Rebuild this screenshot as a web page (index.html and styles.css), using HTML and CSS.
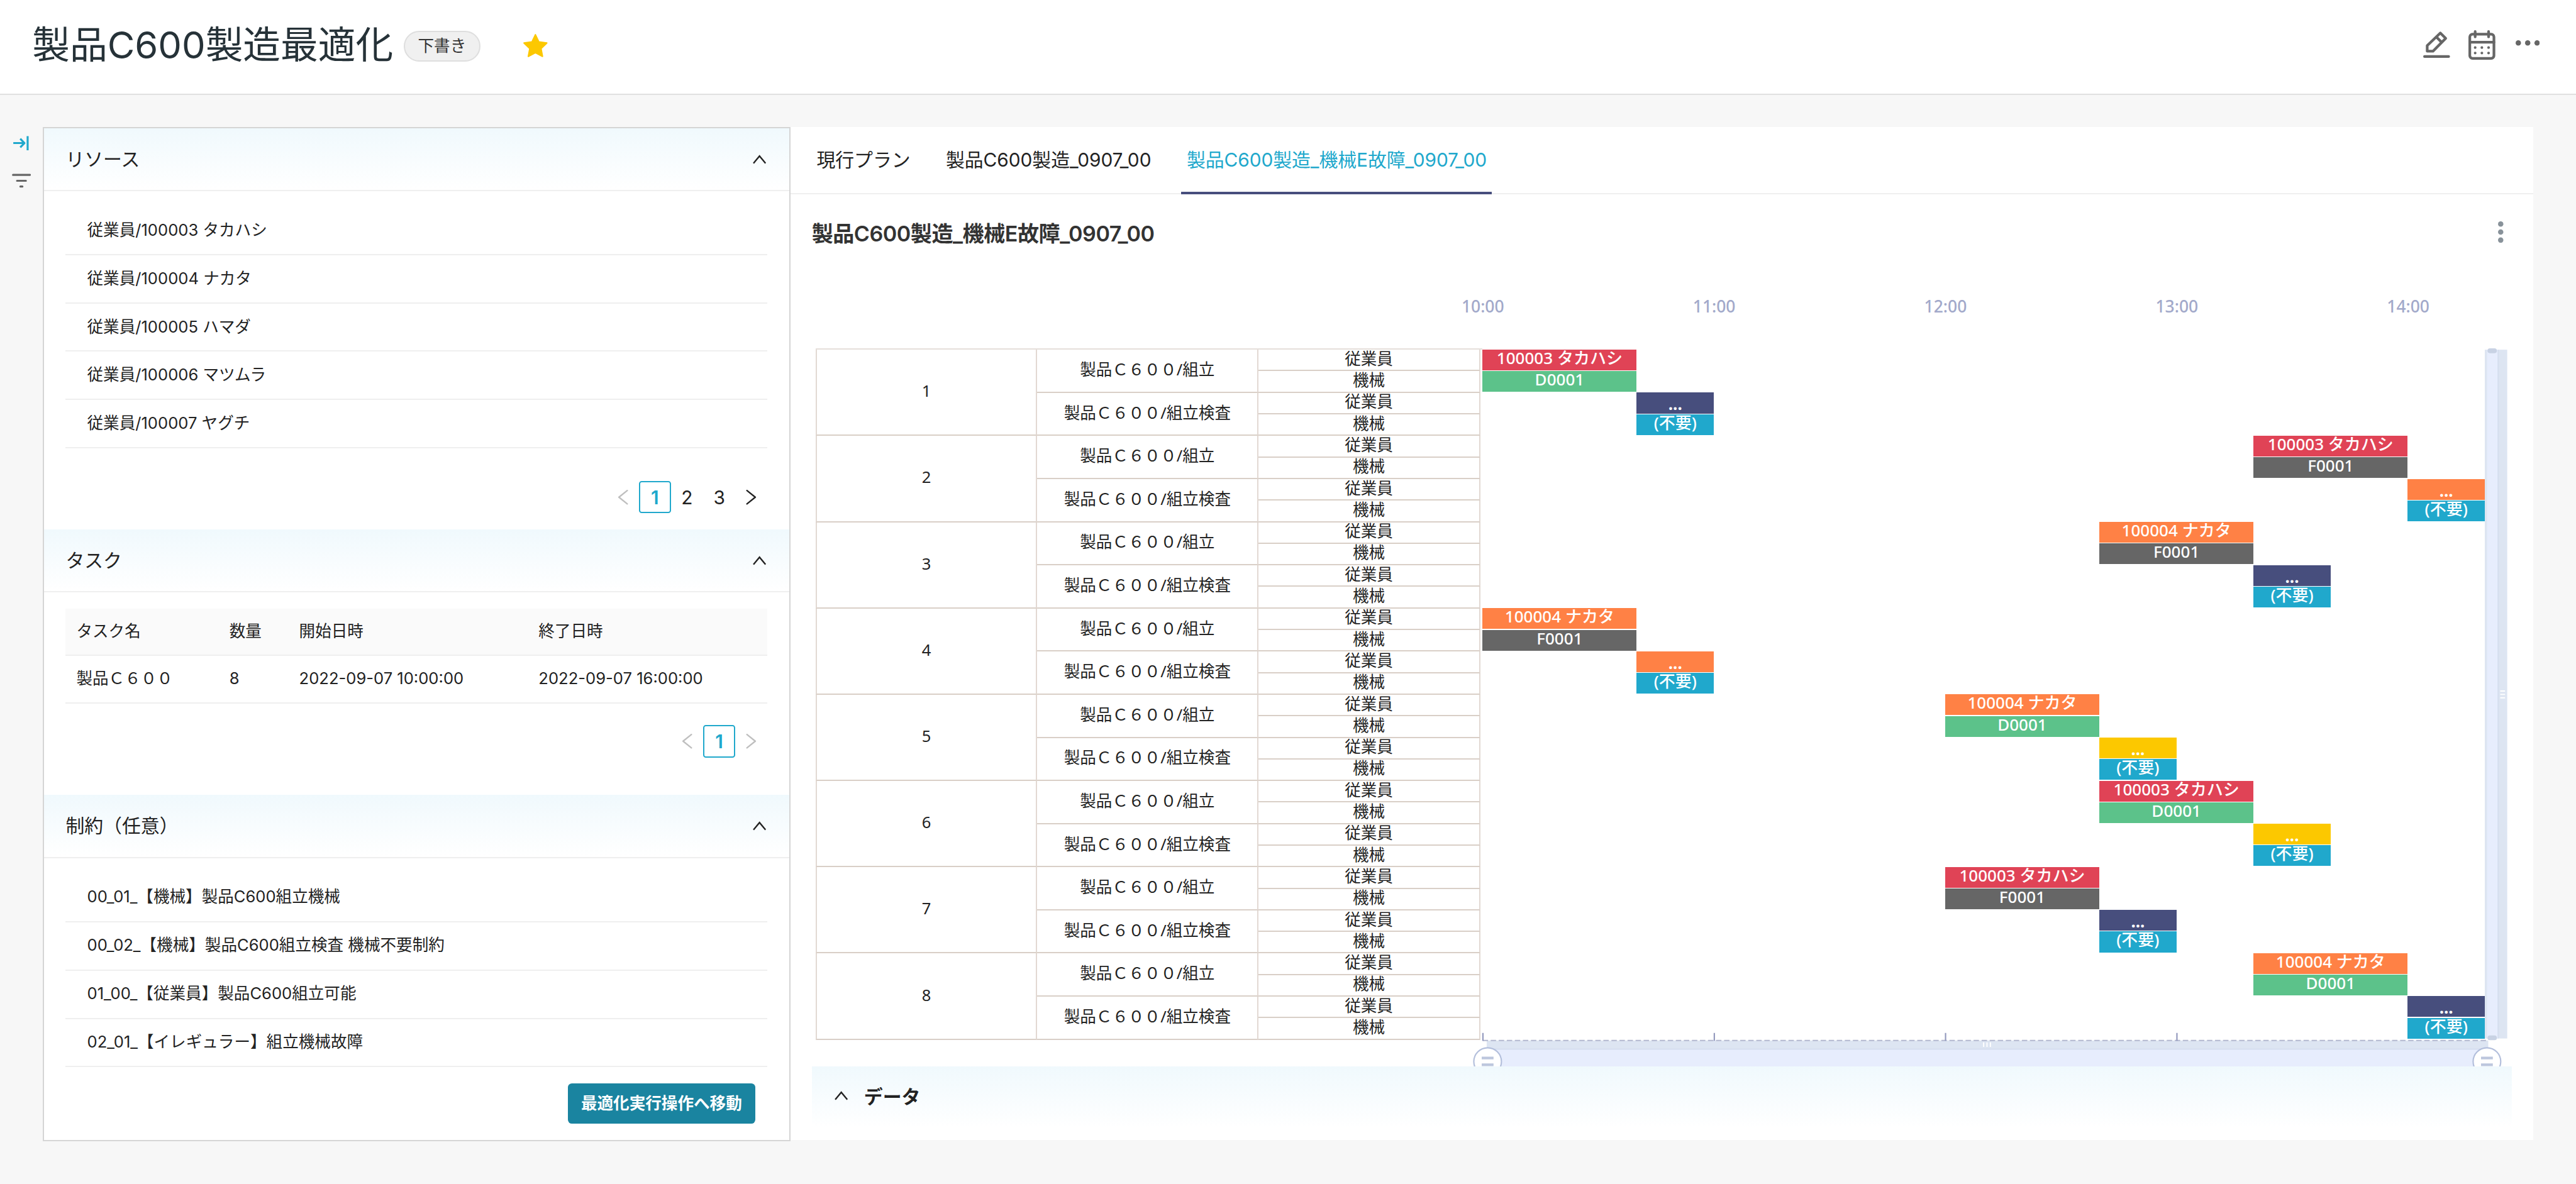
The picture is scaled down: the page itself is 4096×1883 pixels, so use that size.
FILE: index.html
```html
<!DOCTYPE html>
<html lang="ja">
<head>
    <meta charset="UTF-8">
    <meta name="viewport" content="width=device-width, initial-scale=1.0">
    <title>製品C600製造最適化</title>
    <link rel="stylesheet" href="styles.css">
</head>
<body>
    <header class="page-header">
        <h1>製品C600製造最適化</h1>
        <span class="badge">下書き</span>
        <svg class="star" width="20" height="19" viewBox="0 0 20 19"><path d="M10 1l2.6 5.4 5.9.8-4.3 4.1 1.1 5.9L10 14.4l-5.3 2.8 1.1-5.9L1.5 7.2l5.9-.8z" /></svg>
        <div class="header-actions">
            <svg width="20" height="21" viewBox="0 0 20 21">
                <path d="M3 15.2V11l9.8-9.4 4 4-9.5 9.6zM9.8 4.6l3.9 3.9M1 19.2h18" />
            </svg>
            <svg class="icon-calendar" width="20" height="22" viewBox="0 0 20 22">
                <rect x="1" y="3" width="18" height="18" rx="2" />
                <path d="M1 9h18M5 1v4M15 1v4M5 13h0M10 13h0M15 13h0M5 17h0M10 17h0M15 17h0" />
            </svg>
            <svg class="icon-more" width="18" height="4" viewBox="0 0 18 4">
                <circle cx="2" cy="2" r="2" /><circle cx="9" cy="2" r="2" /><circle cx="16" cy="2" r="2" />
            </svg>
        </div>
    </header>

    <main class="content">
        <nav class="rail">
            <svg class="icon-collapse" width="14" height="11" viewBox="0 0 14 11"><path d="M1 5.4h7.8M6.2 2.2l3.1 3.2-3.1 3.2M11.7.2v10.6" /></svg>
            <svg class="icon-filter" width="14" height="11" viewBox="0 0 14 11"><path d="M.8 1h12.6M3.8 5.4h6.6M6.3 9.7h1.5" /></svg>
        </nav>

        <aside class="side-panel">
            <section>
                <h2>リソース <svg class="chevron" width="10" height="7" viewBox="0 0 10 7"><path d="M.5 6.4L5 1l4.5 5.4" /></svg></h2>
                <ul class="list resource-list">
                    <li>従業員/100003 タカハシ</li>
                    <li>従業員/100004 ナカタ</li>
                    <li>従業員/100005 ハマダ</li>
                    <li>従業員/100006 マツムラ</li>
                    <li>従業員/100007 ヤグチ</li>
                </ul>
                <div class="pagination resource-pages">
                    <span class="page disabled"><svg width="8" height="11" viewBox="0 0 8 11"><path d="M7.2.5L1 5.5l6.2 5" /></svg></span>
                    <span class="page active">1</span>
                    <span class="page">2</span>
                    <span class="page">3</span>
                    <span class="page"><svg width="8" height="11" viewBox="0 0 8 11"><path d="M.8.5L7 5.5l-6.2 5" /></svg></span>
                </div>
            </section>

            <section>
                <h2>タスク <svg class="chevron" width="10" height="7" viewBox="0 0 10 7"><path d="M.5 6.4L5 1l4.5 5.4" /></svg></h2>
                <table class="task-table">
                    <thead>
                        <tr>
                            <th class="col-name">タスク名</th>
                            <th class="col-count">数量</th>
                            <th>開始日時</th>
                            <th>終了日時</th>
                        </tr>
                    </thead>
                    <tbody>
                        <tr>
                            <td>製品Ｃ６００</td>
                            <td>8</td>
                            <td>2022-09-07 10:00:00</td>
                            <td>2022-09-07 16:00:00</td>
                        </tr>
                    </tbody>
                </table>
                <div class="pagination task-pages">
                    <span class="page disabled"><svg width="8" height="11" viewBox="0 0 8 11"><path d="M7.2.5L1 5.5l6.2 5" /></svg></span>
                    <span class="page active">1</span>
                    <span class="page disabled"><svg width="8" height="11" viewBox="0 0 8 11"><path d="M.8.5L7 5.5l-6.2 5" /></svg></span>
                </div>
            </section>

            <section>
                <h2>制約（任意） <svg class="chevron" width="10" height="7" viewBox="0 0 10 7"><path d="M.5 6.4L5 1l4.5 5.4" /></svg></h2>
                <ul class="list">
                    <li>00_01_【機械】製品C600組立機械</li>
                    <li>00_02_【機械】製品C600組立検査 機械不要制約</li>
                    <li>01_00_【従業員】製品C600組立可能</li>
                    <li>02_01_【イレギュラー】組立機械故障</li>
                </ul>
                <button class="run-button">最適化実行操作へ移動</button>
            </section>
        </aside>

        <div class="plan-panel">
            <div class="tabs">
                <div class="tab">現行プラン</div>
                <div class="tab">製品C600製造_0907_00</div>
                <div class="tab active">製品C600製造_機械E故障_0907_00</div>
            </div>
            <div class="plan-title">
                <h3>製品C600製造_機械E故障_0907_00</h3>
                <svg width="4" height="16" viewBox="0 0 4 16"><circle cx="2" cy="2" r="2" /><circle cx="2" cy="8" r="2" /><circle cx="2" cy="14" r="2" /></svg>
            </div>
            <div class="gantt">
                <div class="hours" id="hours"></div>
                <div class="gantt-body">
                    <div class="labels" id="labels"></div>
                    <div class="bars" id="bars"></div>
                    <div class="slider-y">
                        <svg width="17" height="516" viewBox="0 0 17 516">
                            <rect class="track" x="0" y="1" width="16.7" height="513.5" />
                            <rect class="range" x="1.7" y="1" width="8" height="513.5" />
                            <path class="edge" d="M10 1v513.5" />
                            <path class="grip" d="M11.5 255.5h3.6M11.5 258h3.6M11.5 260.5h3.6" />
                            <path class="knob" d="M3.8 1.8h3.4M3.8 514h3.4" />
                        </svg>
                    </div>
                </div>
                <div class="slider-x">
                    <svg width="780" height="26" viewBox="0 0 780 26">
                        <rect class="track" x="13" y="6" width="746.7" height="7" />
                        <rect class="range" x="13" y="12.6" width="746.7" height="14" />
                        <path class="edge" d="M13 12.4h746.7" />
                        <path class="axis" d="M10 6h750" />
                        <path class="tick" d="M10.2.4v5.8M182.7.4v5.8M355.1.4v5.8M527.6.4v5.8" />
                        <path class="grip" d="M383.5 7.4v3.4M386 7.4v3.4M388.5 7.4v3.4" />
                        <circle class="handle" cx="13.7" cy="21.7" r="10.3" />
                        <path class="handle-lines" d="M9.3 19.1h8.8M9.3 24.1h8.8" />
                        <circle class="handle" cx="758.7" cy="21.7" r="10.3" />
                        <path class="handle-lines" d="M754.3 19.1h8.8M754.3 24.1h8.8" />
                    </svg>
                </div>
            </div>
            <div class="data-header">
                <svg class="chevron" width="10" height="7" viewBox="0 0 10 7"><path d="M.5 6.4L5 1l4.5 5.4" /></svg>
                データ
            </div>
        </div>
    </main>
    <script src="script.js"></script>
</body>
</html>
```

FILE: styles.css
```css
* {
    box-sizing: border-box;
}
html {
    background: #f7f7f7;
}
body {
    margin: 0;
    width: 1920px;
    height: 882px;
    zoom: 2.13333;
    overflow: hidden;
    background: #f7f7f7;
    color: #222;
    font-family: Inter, "Noto Sans CJK JP", sans-serif;
    font-size: 12px;
}
h1, h2, h3, ul {
    margin: 0;
    padding: 0;
    font-weight: 400;
}
svg {
    display: block;
    flex: none;
    fill: none;
    stroke-linecap: round;
    stroke-linejoin: round;
}

/* header */
.page-header {
    display: flex;
    align-items: center;
    height: 70.8px;
    padding: 0 27px 2.8px 24px;
    background: #fff;
    border-bottom: 1px solid #e0e0e0;
}
.page-header h1 {
    width: 277px;
    font-size: 28px;
    line-height: 40px;
    white-space: nowrap;
    color: #263238;
}
.badge {
    width: 57px;
    height: 23px;
    margin-top: 2px;
    border: 1px solid #dedede;
    border-radius: 12px;
    background: #f0f0f0;
    line-height: 21px;
    text-align: center;
    color: #333;
}
.star {
    margin: 2px 0 0 31px;
    fill: #fcc800;
    stroke: #fcc800;
}
.header-actions {
    display: flex;
    align-items: center;
    gap: 14px;
    margin-left: auto;
    stroke: #666;
    stroke-width: 2;
}
.icon-more {
    margin: 0 0 3px 1px;
    fill: #666;
    stroke: none;
}

/* layout */
.content {
    display: flex;
    align-items: flex-start;
    padding-top: 24px;
}
.rail {
    display: flex;
    flex-direction: column;
    gap: 17px;
    width: 32px;
    padding: 6.5px 0 0 9px;
    stroke-width: 1.5;
}
.icon-collapse {
    stroke: #20a8cc;
    stroke-linecap: butt;
}
.icon-filter {
    stroke: #666;
}
.side-panel {
    width: 557px;
    height: 756px;
    border: 1px solid #d5d5d5;
    background: #fff;
}
.side-panel h2 {
    display: flex;
    align-items: center;
    justify-content: space-between;
    height: 47px;
    padding: 0 17px 2px 16px;
    border-bottom: 1px solid #efefef;
    background: linear-gradient(#f0f9fd, #fff);
    font-size: 14px;
}
.side-panel h2 .chevron {
    margin-top: 2px;
}
.chevron {
    stroke: #222;
    stroke-width: 1.1;
    stroke-linecap: butt;
    stroke-linejoin: miter;
}
.list {
    list-style: none;
    padding: 12px 16px 0;
}
.resource-list {
    padding-top: 11.5px;
}
.list li {
    height: 36px;
    padding-left: 16px;
    border-bottom: 1px solid #efefef;
    line-height: 34px;
}
.resource-list li {
    line-height: 35px;
}

/* pagination */
.pagination {
    display: flex;
    justify-content: flex-end;
    padding: 0 16px;
}
.resource-pages {
    margin: 24.5px 0 12px;
}
.task-pages {
    margin: 16px 0 28px;
}
.page {
    display: flex;
    align-items: center;
    justify-content: center;
    width: 24px;
    height: 24px;
    font-size: 14px;
    stroke: #222;
    stroke-width: 1.1;
}
.page.disabled {
    stroke: #bfbfbf;
}
.page.active {
    border: 1px solid #20a8cc;
    border-radius: 2px;
    color: #20a8cc;
    font-weight: 600;
}

/* task table */
.task-table {
    width: 523px;
    margin: 12px 16px 0;
    border-spacing: 0;
    table-layout: fixed;
}
.task-table th, .task-table td {
    height: 36px;
    padding: 0 8px 0.5px;
    border-bottom: 1px solid #efefef;
    text-align: left;
    font-weight: 400;
    line-height: 18px;
}
.task-table th {
    height: 35px;
    background: #fafafa;
}
.col-name {
    width: 114px;
}
.col-count {
    width: 52px;
}
.run-button {
    display: block;
    width: 140px;
    height: 30px;
    margin: 12px 25px 0 auto;
    padding: 0 0 2px;
    border: none;
    border-radius: 3px;
    background: #1a84a0;
    color: #fff;
    font: 700 12px Inter, "Noto Sans CJK JP", sans-serif;
}

/* plan panel */
.plan-panel {
    width: 1299px;
    height: 755px;
    background: #fff;
}
.tabs {
    display: flex;
    gap: 18.5px;
    height: 50px;
    padding-left: 15.7px;
    border-bottom: 1px solid #efefef;
    font-size: 14px;
    letter-spacing: -0.03px;
    line-height: 49px;
}
.tab {
    height: 50px;
    padding: 0 4px;
    white-space: nowrap;
}
.tab.active {
    border-bottom: 2px solid #474e7d;
    color: #20a8cc;
}
.plan-title {
    display: flex;
    align-items: center;
    justify-content: space-between;
    height: 56px;
    padding: 0 22px 0 16px;
}
.plan-title h3 {
    font-size: 16px;
    font-weight: 600;
    letter-spacing: -0.24px;
    color: #333;
}
.plan-title svg {
    fill: #88929a;
}

/* gantt */
.gantt {
    height: 594px;
    padding-top: 18px;
    overflow: hidden;
    font-family: "Noto Sans", "Noto Sans CJK JP", sans-serif;
}
.hours {
    display: flex;
    height: 41px;
    padding-left: 430px;
    font-size: 12.4px;
    font-weight: 500;
    line-height: 19px;
    text-align: center;
    color: #a2a9ca;
}
.hours span {
    width: 172.43px;
}
.gantt-body {
    display: flex;
    padding-left: 19px;
}
.labels {
    display: grid;
    grid-template-columns: repeat(3, 165.1px);
    grid-template-rows: repeat(32, 16.08px);
    width: 497px;
    height: 515.5px;
    border-top: 1.4px solid #e5dfda;
}
.labels div {
    display: flex;
    align-items: center;
    justify-content: center;
    border-right: 1px solid #e2d9d3;
    border-bottom: 1px solid #d9cfc7;
    line-height: 12px;
    padding-bottom: 1.6px;
}
.labels .order {
    grid-column: 1;
    grid-row: span 4;
    border-left: 1px solid #e2d9d3;
}
.labels .process {
    grid-column: 2;
    grid-row: span 2;
}
.labels .kind {
    grid-column: 3;
}
/* one column is 20 minutes */
.bars {
    display: grid;
    grid-template-columns: repeat(13, 57.47px);
    grid-template-rows: repeat(32, 16.07px);
    width: 747.1px;
    padding-top: 0.8px;
}
.bar {
    height: 15.5px;
    font-size: 12.2px;
    font-weight: 500;
    line-height: 13px;
    text-align: center;
    white-space: nowrap;
    color: #fff;
}
.bar.short {
    font-weight: 700;
    line-height: 17px;
}
.red { background: #e04356; }
.green { background: #5cc28a; }
.navy { background: #474e7d; }
.cyan { background: #20a8cc; }
.orange { background: #ff8145; }
.gray { background: #666; }
.yellow { background: #fcc800; }

.track {
    fill: #dde5f2;
}
.range {
    fill: #e7edfd;
}
.grip {
    stroke: #fff;
    stroke-width: 0.9;
    stroke-linecap: butt;
}
.knob {
    stroke: #c8d2e4;
    stroke-width: 3.6;
}
.edge {
    stroke: #d5deef;
    stroke-linecap: butt;
}
.axis {
    stroke: #b3b8cf;
    stroke-dasharray: 4 2;
    stroke-linecap: butt;
}
.tick {
    stroke: #9298bd;
    stroke-linecap: butt;
}
.slider-x {
    margin: -6px 0 0 506px;
}
.handle {
    fill: #fff;
    stroke: #b3bfdc;
}
.handle-lines {
    stroke: #bcc6dd;
    stroke-width: 2;
    stroke-linecap: butt;
}
.data-header {
    display: flex;
    align-items: center;
    gap: 12px;
    width: 1267px;
    height: 46px;
    margin-left: 16px;
    padding: 0 0 2px 17px;
    background: linear-gradient(#f0f9fd, #fff);
    font-size: 14px;
    font-weight: 700;
}
```

FILE: script.js
```js
// start: number of 20 minute steps after 10:00
const orders = [
    { start: 0, worker: ['100003 タカハシ', 'red'], machine: ['D0001', 'green'], check: 'navy' },
    { start: 10, worker: ['100003 タカハシ', 'red'], machine: ['F0001', 'gray'], check: 'orange' },
    { start: 8, worker: ['100004 ナカタ', 'orange'], machine: ['F0001', 'gray'], check: 'navy' },
    { start: 0, worker: ['100004 ナカタ', 'orange'], machine: ['F0001', 'gray'], check: 'orange' },
    { start: 6, worker: ['100004 ナカタ', 'orange'], machine: ['D0001', 'green'], check: 'yellow' },
    { start: 8, worker: ['100003 タカハシ', 'red'], machine: ['D0001', 'green'], check: 'yellow' },
    { start: 6, worker: ['100003 タカハシ', 'red'], machine: ['F0001', 'gray'], check: 'navy' },
    { start: 10, worker: ['100004 ナカタ', 'orange'], machine: ['D0001', 'green'], check: 'navy' }
];

function bar(row, start, span, text, color) {
    return `<div class="bar ${color}" style="grid-row: ${row}; grid-column: ${start + 1} / span ${span}">${text}</div>`;
}

function renderHours() {
    const hours = ['10:00', '11:00', '12:00', '13:00', '14:00'];
    document.getElementById('hours').innerHTML = hours.map(h => `<span>${h}</span>`).join('');
}

function renderGantt() {
    let labels = '';
    let bars = '';
    orders.forEach((order, i) => {
        const row = i * 4 + 1;
        labels += `
            <div class="order">${i + 1}</div>
            <div class="process">製品Ｃ６００/組立</div>
            <div class="kind">従業員</div>
            <div class="kind">機械</div>
            <div class="process">製品Ｃ６００/組立検査</div>
            <div class="kind">従業員</div>
            <div class="kind">機械</div>
        `;
        bars += bar(row, order.start, 2, order.worker[0], order.worker[1]);
        bars += bar(row + 1, order.start, 2, order.machine[0], order.machine[1]);
        bars += bar(row + 2, order.start + 2, 1, '...', 'short ' + order.check);
        bars += bar(row + 3, order.start + 2, 1, '(不要)', 'cyan');
    });
    document.getElementById('labels').innerHTML = labels;
    document.getElementById('bars').innerHTML = bars;
}

renderHours();
renderGantt();
```
